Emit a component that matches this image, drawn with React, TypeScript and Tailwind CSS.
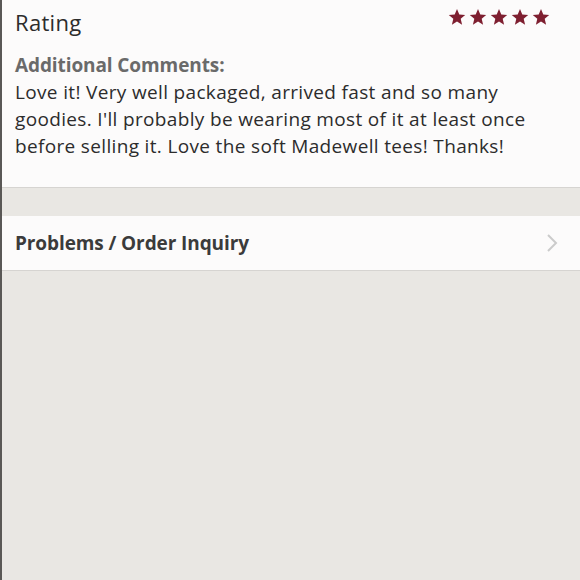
import React from 'react'

function Star() {
  return (
    <svg width="18" height="17" viewBox="0 0 24 23" className="fill-[#7e1f30]">
      <path d="M12 0l3.1 7.4 8 .6-6.1 5.3 1.9 7.9L12 17l-6.9 4.2L7 13.3.9 8l8-.6z" />
    </svg>
  )
}

export default function App() {
  return (
    <div className="w-[580px] h-[580px] bg-[#e9e7e3] border-l-2 border-[#5a5856] font-['Open_Sans',sans-serif] overflow-hidden">
      <div className="bg-[#fcfbfb] border-b border-[#d6d4d1] h-[188px] pl-[13px] pr-[30px] pt-[7px]">
        <div className="flex justify-between items-start">
          <h2 className="text-[22px] tracking-[0.3px] text-[#2c2c2c] leading-[30px]">Rating</h2>
          <div className="flex gap-[3px] mt-[2px]">
            <Star />
            <Star />
            <Star />
            <Star />
            <Star />
          </div>
        </div>
        <div className="mt-[15px] text-[19px] leading-[27px]">
          <div className="font-bold text-[#6a6a6a] tracking-[-0.1px]">Additional Comments:</div>
          <p className="text-[#2c2c2c] tracking-[0.34px] w-[540px]">
            Love it! Very well packaged, arrived fast and so many goodies. I'll probably be wearing most of it at least once before selling it. Love the soft Madewell tees! Thanks!
          </p>
        </div>
      </div>
      <div className="h-[28px]" />
      <div className="bg-[#fcfbfb] border-b border-[#d6d4d1] h-[55px] pl-[13px] pr-[22px] flex items-center justify-between">
        <span className="text-[19px] font-bold text-[#3b3b3b] tracking-[-0.1px]">Problems / Order Inquiry</span>
        <svg width="12" height="20" viewBox="0 0 12 20" fill="none" stroke="#cbcbcb" strokeWidth="2">
          <path d="M2 2l8 8-8 8" />
        </svg>
      </div>
    </div>
  )
}
